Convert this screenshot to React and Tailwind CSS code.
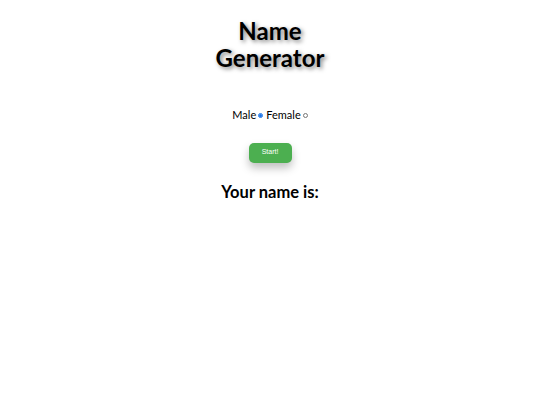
export default function App() {
  return (
    <div className="min-h-screen bg-white text-center text-black" style={{ fontFamily: "Lato, 'Liberation Sans', sans-serif" }}>
      <h1 className="mx-auto w-[130px] pt-[17px] text-[24px] font-bold leading-[27px] [text-shadow:2px_2px_4px_rgba(0,0,0,0.5)]">
        Name Generator
      </h1>

      <div className="mt-[36px] flex items-center justify-center gap-[2px] text-[11px]">
        <label className="flex items-center gap-[2px]">
          Male
          <input type="radio" name="gender" defaultChecked className="h-[5px] w-[5px] accent-[#1a73e8]" />
        </label>
        <label className="ml-[1px] flex items-center gap-[2px]">
          Female
          <input type="radio" name="gender" className="h-[5px] w-[5px]" />
        </label>
      </div>

      <div className="mt-[19px] flex justify-center">
        <button className="h-[20px] w-[43px] rounded-[5px] bg-[#4caf50] text-[7px] text-white shadow-[0_5px_8px_rgba(0,0,0,0.25)]" style={{ fontFamily: "'Liberation Sans', Arial, sans-serif" }}>
          Start!
        </button>
      </div>

      <h2 className="mt-[17px] text-[16.5px] font-bold">Your name is:</h2>
    </div>
  );
}
